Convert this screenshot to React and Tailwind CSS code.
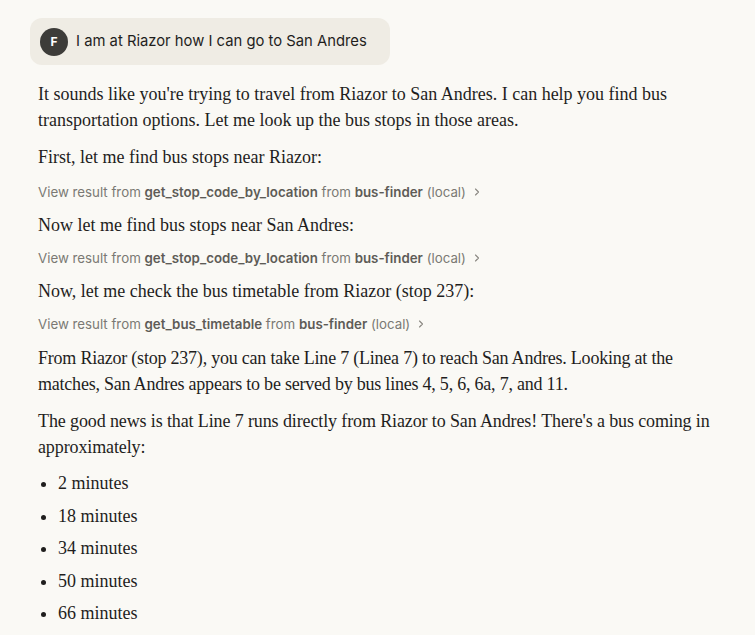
import React from "react";

const serif = { fontFamily: '"Liberation Serif", "DejaVu Serif", serif' };

const ToolResult = ({ tool }) => (
  <div className="flex h-[20px] items-center text-[13.3px] leading-[20px] text-[#7b7974] font-['Inter',sans-serif]">
    <span>View result from&nbsp;</span>
    <span className="font-semibold text-[#5e5c57]">{tool}</span>
    <span>&nbsp;from&nbsp;</span>
    <span className="font-semibold text-[#5e5c57]">bus-finder</span>
    <span>&nbsp;(local)</span>
    <svg className="ml-[6px]" width="10" height="10" viewBox="0 0 10 10" fill="none">
      <path d="M3.5 2 L6.5 5 L3.5 8" stroke="#8a8781" strokeWidth="1.1" strokeLinecap="round" strokeLinejoin="round" />
    </svg>
  </div>
);

const times = ["2 minutes", "18 minutes", "34 minutes", "50 minutes", "66 minutes"];

export default function App() {
  return (
    <div className="min-h-[635px] w-full bg-[#faf9f5] pl-[30px] pr-[10px] pt-[18px] overflow-hidden">
      {/* user message */}
      <div className="inline-flex items-center gap-[8px] rounded-xl bg-[#efece4] pl-[10px] pr-[23px] h-[47px]">
        <div className="flex h-[28px] w-[28px] items-center justify-center rounded-full bg-[#3d3c39] text-[12px] font-bold text-white font-['Inter',sans-serif]">
          F
        </div>
        <span className="text-[14.8px] text-[#1f1e1d] font-['Inter',sans-serif]">
          I am at Riazor how I can go to San Andres
        </span>
      </div>

      {/* assistant reply */}
      <div className="ml-[8px] mt-[16px] text-[18px] leading-[26px] text-[#1f1e1d]" style={serif}>
        <p>
          It sounds like you're trying to travel from Riazor to San Andres. I can help you find bus
          <br />
          transportation options. Let me look up the bus stops in those areas.
        </p>
        <p className="mt-[11px]">First, let me find bus stops near Riazor:</p>
        <div className="mt-[12px]">
          <ToolResult tool="get_stop_code_by_location" />
        </div>
        <p className="mt-[10px]">Now let me find bus stops near San Andres:</p>
        <div className="mt-[10px]">
          <ToolResult tool="get_stop_code_by_location" />
        </div>
        <p className="mt-[10px]">Now, let me check the bus timetable from Riazor (stop 237):</p>
        <div className="mt-[10px]">
          <ToolResult tool="get_bus_timetable" />
        </div>
        <p className="mt-[11px] tracking-[-0.22px]">
          From Riazor (stop 237), you can take Line 7 (Linea 7) to reach San Andres. Looking at the
          <br />
          matches, San Andres appears to be served by bus lines 4, 5, 6, 6a, 7, and 11.
        </p>
        <p className="mt-[11px] tracking-[-0.12px]">
          The good news is that Line 7 runs directly from Riazor to San Andres! There's a bus coming in
          <br />
          approximately:
        </p>
        <ul className="mt-[10px] list-disc pl-[20px]">
          {times.map((t) => (
            <li key={t} className="h-[32.5px] leading-[26px]">
              {t}
            </li>
          ))}
        </ul>
      </div>
    </div>
  );
}
